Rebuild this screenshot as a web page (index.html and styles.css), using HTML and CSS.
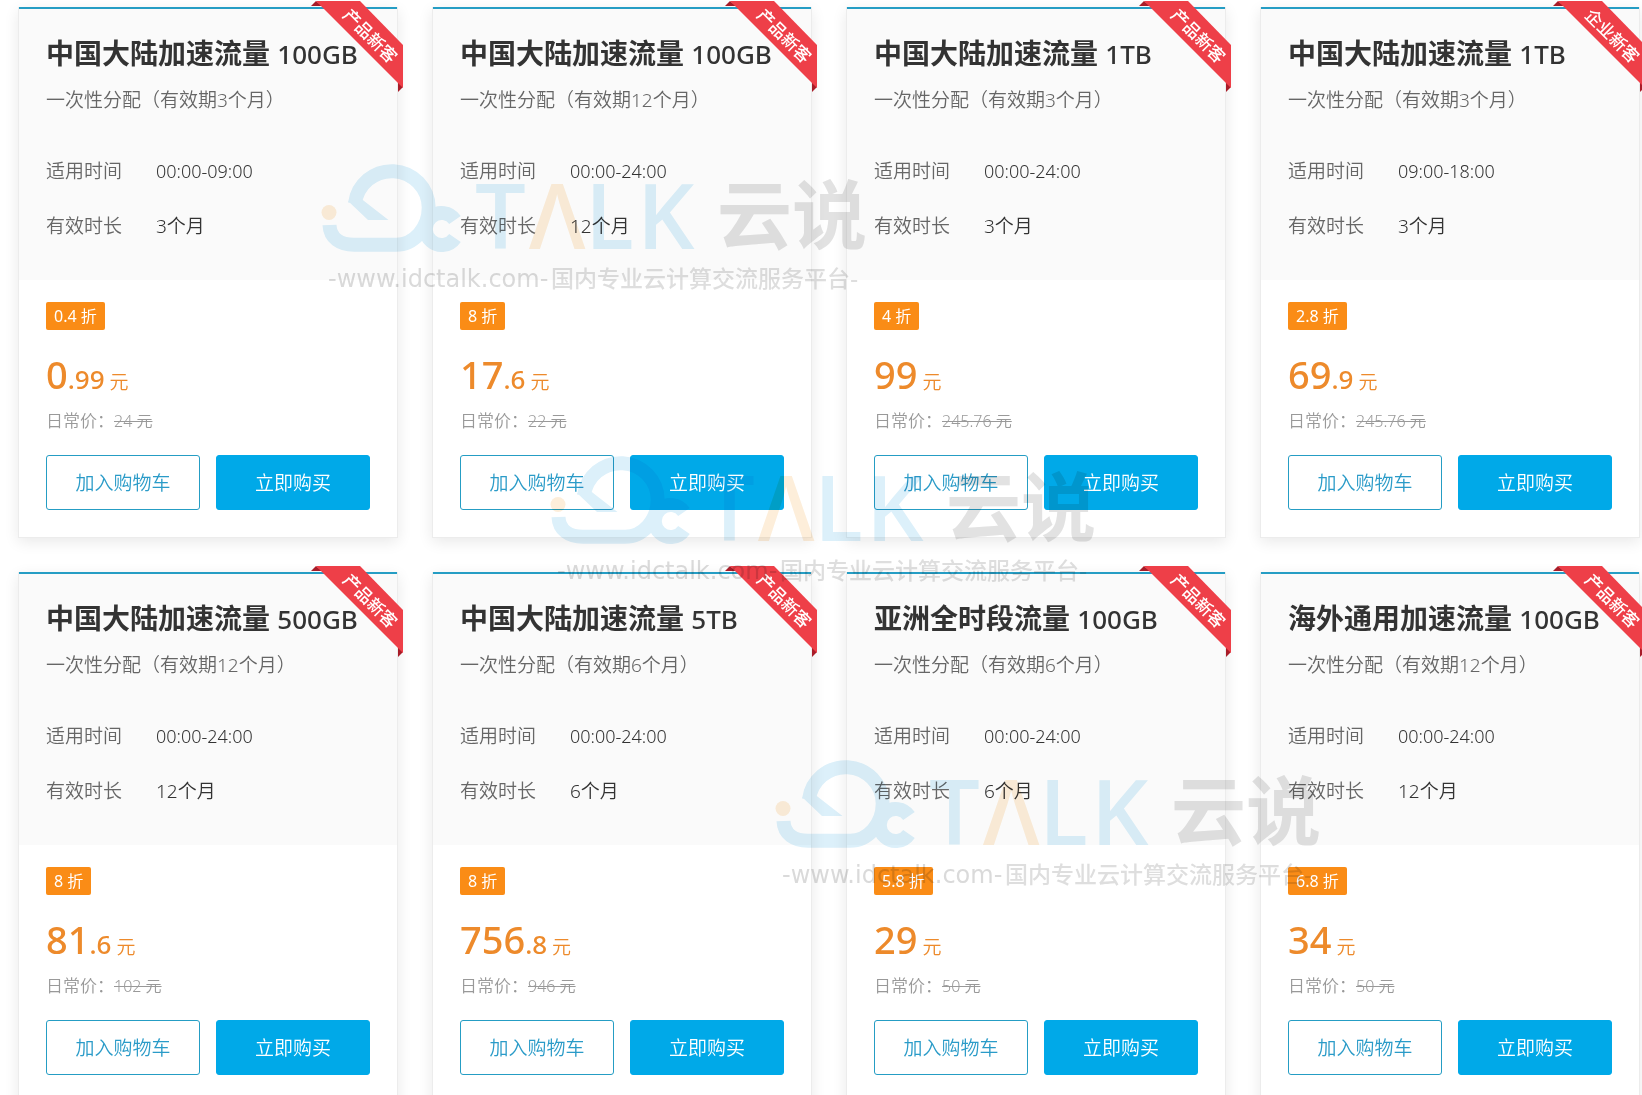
FILE: index.html
```
<!DOCTYPE html>
<html lang="zh-CN">
<head>
    <meta charset="UTF-8">
    <meta name="viewport" content="width=device-width, initial-scale=1.0">
    <title>加速流量</title>
    <link rel="stylesheet" href="styles.css">
</head>
<body>
    <!-- Shared shapes -->
    <svg class="sprite" aria-hidden="true">
        <symbol id="ribbon" viewBox="0 0 92 92">
            <path d="M0 6L5 1L11 6Z" fill="#a81c28"/>
            <path d="M87 82L92 87L87 92Z" fill="#a81c28"/>
            <path d="M5 1H49L92 45V88Z" fill="#ee3f48"/>
        </symbol>
        <symbol id="logo" viewBox="0 0 550 135">
            <g fill="none" stroke="#dcf0fa" stroke-width="14">
                <path d="M9.500 65C10 78 20 84.700 34 84.700H76C94 84.700 108.700 68 108.700 47.500A37 37 0 0 0 35 43.500"/>
                <path d="M135 60A16 16 0 1 0 135 78"/>
            </g>
            <path d="M28 41L41.500 39L68.500 60H48Z" fill="#dcf0fa"/>
            <circle cx="9" cy="52.500" r="7.500" fill="#fdeeda"/>
            <g class="logo-latin" fill="#dcf0fa">
                <text x="155" y="89">T</text>
                <text x="209" y="89" fill="#fdeeda">Λ</text>
                <text x="265" y="89">L</text>
                <text x="317" y="89">K</text>
            </g>
            <text class="logo-cn" x="397" y="83" fill="#e2e2e2">云说</text>
            <text class="logo-url" x="8" y="127" fill="#dadada">-www.idctalk.com-</text>
            <text class="logo-slogan" x="231" y="127" fill="#dedede">国内专业云计算交流服务平台-</text>
        </symbol>
    </svg>

    <main class="cards">
        <section class="card">
            <div class="ribbon"><svg><use href="#ribbon"/></svg><span>产品新客</span></div>
            <div class="card-head">
                <h2>中国大陆加速流量 <span>100GB</span></h2>
                <p class="desc">一次性分配（有效期3个月）</p>
                <dl class="specs">
                    <dt>适用时间</dt><dd class="time">00:00-09:00</dd>
                    <dt>有效时长</dt><dd>3个月</dd>
                </dl>
            </div>
            <div class="card-body">
                <span class="tag">0.4 折</span>
                <p class="price"><strong>0<small>.99</small></strong> 元</p>
                <p class="daily">日常价：<del>24 元</del></p>
                <div class="actions">
                    <button type="button" class="btn">加入购物车</button>
                    <button type="button" class="btn btn-buy">立即购买</button>
                </div>
            </div>
        </section>

        <section class="card">
            <div class="ribbon"><svg><use href="#ribbon"/></svg><span>产品新客</span></div>
            <div class="card-head">
                <h2>中国大陆加速流量 <span>100GB</span></h2>
                <p class="desc">一次性分配（有效期12个月）</p>
                <dl class="specs">
                    <dt>适用时间</dt><dd class="time">00:00-24:00</dd>
                    <dt>有效时长</dt><dd>12个月</dd>
                </dl>
            </div>
            <div class="card-body">
                <span class="tag">8 折</span>
                <p class="price"><strong>17<small>.6</small></strong> 元</p>
                <p class="daily">日常价：<del>22 元</del></p>
                <div class="actions">
                    <button type="button" class="btn">加入购物车</button>
                    <button type="button" class="btn btn-buy">立即购买</button>
                </div>
            </div>
        </section>

        <section class="card">
            <div class="ribbon"><svg><use href="#ribbon"/></svg><span>产品新客</span></div>
            <div class="card-head">
                <h2>中国大陆加速流量 <span>1TB</span></h2>
                <p class="desc">一次性分配（有效期3个月）</p>
                <dl class="specs">
                    <dt>适用时间</dt><dd class="time">00:00-24:00</dd>
                    <dt>有效时长</dt><dd>3个月</dd>
                </dl>
            </div>
            <div class="card-body">
                <span class="tag">4 折</span>
                <p class="price"><strong>99</strong> 元</p>
                <p class="daily">日常价：<del>245.76 元</del></p>
                <div class="actions">
                    <button type="button" class="btn">加入购物车</button>
                    <button type="button" class="btn btn-buy">立即购买</button>
                </div>
            </div>
        </section>

        <section class="card">
            <div class="ribbon"><svg><use href="#ribbon"/></svg><span>企业新客</span></div>
            <div class="card-head">
                <h2>中国大陆加速流量 <span>1TB</span></h2>
                <p class="desc">一次性分配（有效期3个月）</p>
                <dl class="specs">
                    <dt>适用时间</dt><dd class="time">09:00-18:00</dd>
                    <dt>有效时长</dt><dd>3个月</dd>
                </dl>
            </div>
            <div class="card-body">
                <span class="tag">2.8 折</span>
                <p class="price"><strong>69<small>.9</small></strong> 元</p>
                <p class="daily">日常价：<del>245.76 元</del></p>
                <div class="actions">
                    <button type="button" class="btn">加入购物车</button>
                    <button type="button" class="btn btn-buy">立即购买</button>
                </div>
            </div>
        </section>

        <section class="card">
            <div class="ribbon"><svg><use href="#ribbon"/></svg><span>产品新客</span></div>
            <div class="card-head">
                <h2>中国大陆加速流量 <span>500GB</span></h2>
                <p class="desc">一次性分配（有效期12个月）</p>
                <dl class="specs">
                    <dt>适用时间</dt><dd class="time">00:00-24:00</dd>
                    <dt>有效时长</dt><dd>12个月</dd>
                </dl>
            </div>
            <div class="card-body">
                <span class="tag">8 折</span>
                <p class="price"><strong>81<small>.6</small></strong> 元</p>
                <p class="daily">日常价：<del>102 元</del></p>
                <div class="actions">
                    <button type="button" class="btn">加入购物车</button>
                    <button type="button" class="btn btn-buy">立即购买</button>
                </div>
            </div>
        </section>

        <section class="card">
            <div class="ribbon"><svg><use href="#ribbon"/></svg><span>产品新客</span></div>
            <div class="card-head">
                <h2>中国大陆加速流量 <span>5TB</span></h2>
                <p class="desc">一次性分配（有效期6个月）</p>
                <dl class="specs">
                    <dt>适用时间</dt><dd class="time">00:00-24:00</dd>
                    <dt>有效时长</dt><dd>6个月</dd>
                </dl>
            </div>
            <div class="card-body">
                <span class="tag">8 折</span>
                <p class="price"><strong>756<small>.8</small></strong> 元</p>
                <p class="daily">日常价：<del>946 元</del></p>
                <div class="actions">
                    <button type="button" class="btn">加入购物车</button>
                    <button type="button" class="btn btn-buy">立即购买</button>
                </div>
            </div>
        </section>

        <section class="card">
            <div class="ribbon"><svg><use href="#ribbon"/></svg><span>产品新客</span></div>
            <div class="card-head">
                <h2>亚洲全时段流量 <span>100GB</span></h2>
                <p class="desc">一次性分配（有效期6个月）</p>
                <dl class="specs">
                    <dt>适用时间</dt><dd class="time">00:00-24:00</dd>
                    <dt>有效时长</dt><dd>6个月</dd>
                </dl>
            </div>
            <div class="card-body">
                <span class="tag">5.8 折</span>
                <p class="price"><strong>29</strong> 元</p>
                <p class="daily">日常价：<del>50 元</del></p>
                <div class="actions">
                    <button type="button" class="btn">加入购物车</button>
                    <button type="button" class="btn btn-buy">立即购买</button>
                </div>
            </div>
        </section>

        <section class="card">
            <div class="ribbon"><svg><use href="#ribbon"/></svg><span>产品新客</span></div>
            <div class="card-head">
                <h2>海外通用加速流量 <span>100GB</span></h2>
                <p class="desc">一次性分配（有效期12个月）</p>
                <dl class="specs">
                    <dt>适用时间</dt><dd class="time">00:00-24:00</dd>
                    <dt>有效时长</dt><dd>12个月</dd>
                </dl>
            </div>
            <div class="card-body">
                <span class="tag">6.8 折</span>
                <p class="price"><strong>34</strong> 元</p>
                <p class="daily">日常价：<del>50 元</del></p>
                <div class="actions">
                    <button type="button" class="btn">加入购物车</button>
                    <button type="button" class="btn btn-buy">立即购买</button>
                </div>
            </div>
        </section>
    </main>

    <!-- Watermarks over the cards -->
    <svg class="watermark watermark-1"><use href="#logo"/></svg>
    <svg class="watermark watermark-2"><use href="#logo"/></svg>
    <svg class="watermark watermark-3"><use href="#logo"/></svg>
</body>
</html>
```
FILE: styles.css
```
* {
    box-sizing: border-box;
}
html {
    overflow: hidden;
    background: #fff;
}
body {
    margin: 0;
    position: relative;
    font-family: "Noto Sans", "Noto Sans CJK SC", sans-serif;
    font-size: 19px;
    font-weight: 350;
    line-height: 30px;
    color: #333;
}
h2, p, dl, dd {
    margin: 0;
}
.sprite {
    position: absolute;
    width: 0;
    height: 0;
}
.cards {
    display: grid;
    grid-template-columns: repeat(4, 1fr);
    gap: 34px;
    padding: 7px 2px 34px 18px;
}
.card {
    position: relative;
    background: #fff;
    border: 1px solid #ececec;
    border-top: 0;
    box-shadow: 0 4px 14px rgba(0,0,0,0.09);
}
.card-head {
    padding: 25px 0 39px 27px;
    border-top: 2px solid #259dc4;
    background: #fafafa;
}
.card-head h2 {
    height: 40px;
    font-size: 28px;
    font-weight: 700;
    line-height: 38px;
    white-space: nowrap;
}
.card-head h2 span {
    font-size: 26px;
    font-weight: 500;
}
.desc {
    margin-top: 11px;
    color: #666;
    white-space: nowrap;
}
.specs {
    display: grid;
    grid-template-columns: 110px 1fr;
    row-gap: 25px;
    margin-top: 41px;
}
.specs dt {
    color: #666;
}
.specs .time {
    font-size: 18px;
}

/* Corner ribbon */
.ribbon {
    position: absolute;
    top: -7px;
    right: -6px;
    width: 92px;
    height: 92px;
}
.ribbon svg {
    display: block;
    width: 92px;
    height: 92px;
}
.ribbon span {
    position: absolute;
    top: 24px;
    left: 24px;
    width: 70px;
    font-size: 17px;
    font-weight: 500;
    line-height: 24px;
    text-align: center;
    color: #fff;
    transform: rotate(45deg);
}

/* Price area */
.card-body {
    padding: 22px 27px 27px;
}
.tag {
    display: block;
    width: fit-content;
    padding: 0 8px;
    border-radius: 2px;
    background: #fa8c16;
    color: #fff;
    font-size: 16px;
    font-weight: 400;
    line-height: 28px;
}
.price {
    height: 50px;
    margin-top: 20px;
    line-height: 48px;
    color: #ed8a2b;
}
.price strong {
    font-size: 38px;
    font-weight: 500;
}
.price small {
    font-size: 26px;
}
.daily {
    height: 30px;
    margin-top: 6px;
    font-size: 17px;
    color: #999;
}
.daily del {
    font-size: 16px;
}
.actions {
    display: flex;
    gap: 16px;
    margin-top: 19px;
}
.btn {
    flex: 1;
    height: 55px;
    padding: 0;
    border: 1px solid #259dc4;
    border-radius: 3px;
    background: #fff;
    color: #2a9bc8;
    font: inherit;
    cursor: pointer;
}
.btn-buy {
    border-color: #00a9e8;
    background: #00a9e8;
    color: #fff;
}

/* Watermark */
.watermark {
    position: absolute;
    width: 550px;
    height: 135px;
    mix-blend-mode: multiply;
    pointer-events: none;
}
.watermark-1 {
    top: 160px;
    left: 320px;
}
.watermark-2 {
    top: 452px;
    left: 549px;
}
.watermark-3 {
    top: 756px;
    left: 774px;
}
.logo-latin {
    font-family: "Open Sans", "Noto Sans", sans-serif;
    font-size: 90px;
    font-weight: 600;
}
.logo-cn {
    font-family: "Noto Sans CJK SC", sans-serif;
    font-size: 75px;
    font-weight: 700;
}
.logo-url {
    font-family: "DejaVu Sans", sans-serif;
    font-size: 24px;
    font-weight: 400;
}
.logo-slogan {
    font-family: "Noto Sans CJK SC", sans-serif;
    font-size: 23px;
    font-weight: 500;
}
```
